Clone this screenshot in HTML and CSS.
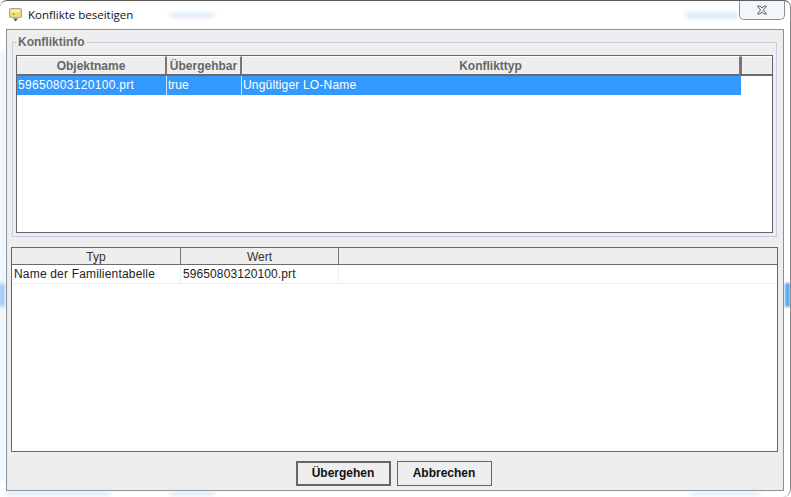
FILE: index.html
```html
<!DOCTYPE html>
<html lang="de">
<head>
<meta charset="utf-8">
<title>Konflikte beseitigen</title>
<link rel="stylesheet" href="styles.css">
</head>
<body>
<div class="window">
  <span class="smudge s1"></span><span class="smudge s2"></span><span class="smudge s3"></span><span class="smudge s4"></span><span class="smudge s5"></span><span class="smudge s6"></span><span class="smudge s7"></span><span class="smudge s8"></span><span class="smudge s9"></span>
  <header class="titlebar">
    <svg class="appicon" width="16" height="16" viewBox="0 0 16 16">
      <rect x="1.500" y="1.500" width="12" height="9" rx="1.500" fill="#f3dc7c" stroke="#a9a68e"/>
      <rect x="3" y="3" width="9" height="2" fill="#fbf0b8"/>
      <circle cx="5.500" cy="7" r="1" fill="#b89a3c"/>
      <path d="M5 11.500h5l-2.500 3z" fill="#4f5a5e"/>
    </svg>
    <span class="title">Konflikte beseitigen</span>
    <button class="close" aria-label="Schließen">
      <svg width="12" height="10" viewBox="0 0 12 10"><path d="M1.500 1h2.500l2 2 2-2h2.500l-3 4 3 4h-2.500l-2-2.200-2 2.200h-2.500l3-4z" fill="#eef1f4" stroke="#555" stroke-width=".9"/></svg>
    </button>
  </header>
  <main class="panel">
    <section class="group">
      <h2 class="legend">Konfliktinfo</h2>
      <div class="table t1">
        <div class="row head">
          <div class="cell c1">Objektname</div>
          <div class="cell c2">Übergehbar</div>
          <div class="cell c3">Konflikttyp</div>
          <div class="cell c4"></div>
        </div>
        <div class="row">
          <div class="sel c1 wide">59650803120100.prt</div>
          <div class="sel c2">true</div>
          <div class="sel c3 spaced">Ungültiger LO-Name</div>
        </div>
      </div>
    </section>
    <section class="table t2">
      <div class="row head">
        <div class="cell d1">Typ</div>
        <div class="cell d2">Wert</div>
        <div class="cell d3"></div>
      </div>
      <div class="row body">
        <div class="val d1 spaced">Name der Familientabelle</div>
        <div class="val d2 narrow">59650803120100.prt</div>
        <div class="val d3"></div>
      </div>
    </section>
    <footer class="actions">
      <button class="btn primary">Übergehen</button>
      <button class="btn">Abbrechen</button>
    </footer>
  </main>
</div>
</body>
</html>
```
FILE: styles.css
```css
* { box-sizing: border-box; }
html, body { margin: 0; height: 100%; }
body { background: #fff; font-family: "Liberation Sans", Arial, sans-serif; font-size: 12px; overflow: hidden; }

.window {
  position: relative;
  width: 791px;
  height: 497px;
  display: flex;
  flex-direction: column;
  padding: 0 6px 6px 6px;
  background: #fff;
  border-top: 1px solid #5d5d5d;
  border-right: 1px solid #8a8a8a;
  border-radius: 7px 7px 8px 0;
  overflow: hidden;
}

.smudge { position: absolute; background: #a9cdf2; filter: blur(2px); opacity: .6; }
.s1 { left: 170px; top: 12px; width: 44px; height: 4px; opacity: .5; }
.s2 { left: 686px; top: 12px; width: 52px; height: 5px; opacity: .5; }
.s3 { left: 6px; top: 491px; width: 104px; height: 3px; }
.s4 { left: 170px; top: 491px; width: 45px; height: 3px; }
.s5 { left: 0; top: 50px; width: 5px; height: 230px; opacity: .28; }
.s6 { left: 0; top: 282px; width: 4px; height: 24px; background: #5aa4ec; opacity: .9; }
.s7 { left: 785px; top: 282px; width: 5px; height: 24px; background: #4a9cf0; opacity: .9; filter: blur(1px); }
.s8 { left: 0; top: 310px; width: 5px; height: 170px; opacity: .28; }
.s9 { left: 690px; top: 491px; width: 70px; height: 3px; opacity: .5; }

.titlebar { height: 28px; flex: none; display: flex; align-items: center; position: relative; }
.appicon { margin: 0 4px 0 2px; flex: none; }
.title { font-family: "Open Sans", "Noto Sans", sans-serif; font-size: 11.500px; color: #111; margin-top: -1px; }
.close {
  position: absolute;
  right: -1px;
  top: -1px;
  width: 46px;
  height: 20px;
  padding: 0;
  display: flex;
  align-items: center;
  justify-content: center;
  background: #f4f7fa;
  border: 1px solid #8c9299;
  border-top: 0;
  border-radius: 0 0 5px 5px;
}

.panel {
  flex: 1;
  min-height: 0;
  display: flex;
  flex-direction: column;
  background: #eee;
  border: 1px solid #8f8f8f;
  padding: 0 5px 0 4px;
}

.group {
  position: relative;
  height: 195px;
  margin: 12px 1px 0 1px;
  padding: 12px 3px 3px;
  border: 1px solid #c3cfe0;
  flex: none;
}
.legend {
  position: absolute;
  left: 3px;
  top: -8px;
  margin: 0;
  padding: 0 2px;
  background: #eee;
  color: #6a6a6a;
  font-size: 12px;
  line-height: 14px;
  font-weight: bold;
}

.table { background: #fff; border: 1px solid #666; }
.t1 { height: 178px; }
.t2 { margin-top: 10px; flex: none; height: 205px; }

.row { display: flex; }
.head { background: #eee; }
.t1 .head { height: 20px; border-bottom: 2px solid #6b6b6b; }
.t2 .head { height: 17px; border-bottom: 1px solid #6b6b6b; }
.cell { text-align: center; border-right: 2px solid #777; line-height: 19px; }
.t1 .cell { color: #666; font-weight: bold; border-top: 1px solid #fff; line-height: 19px; }
.t2 .cell { color: #333; line-height: 18px; border-right: 1px solid #777; }
.cell:last-child { border-right: 0; }

.c1 { width: 150px; }
.c2 { width: 75px; }
.c3 { width: 499px; }
.c4 { flex: 1; }
.t1 .c4 { border-left: 1px solid #777; }

.sel {
  height: 19px;
  line-height: 19px;
  padding-left: 1px;
  color: #fff;
  background: #3399ff;
  border-right: 1px solid #cfe6ff;
}
.sel.c3 { border-right: 0; }
.spaced { letter-spacing: .18px; }
.wide { letter-spacing: .3px; }
.narrow { letter-spacing: .1px; }

.d1 { width: 169px; }
.d2 { width: 158px; }
.d3 { flex: 1; }

.body { border-bottom: 1px solid #eee; height: 19px; }
.val { line-height: 19px; padding-left: 2px; color: #222; border-right: 1px solid #eee; }
.val:last-child { border-right: 0; }

.actions { flex: 1; display: flex; justify-content: center; align-items: center; gap: 6px; padding: 4px 2px 0 0; }
.btn {
  width: 95px;
  height: 25px;
  padding: 0;
  font-family: inherit;
  font-size: 12px;
  font-weight: bold;
  color: #111;
  background: #eee;
  border: 1px solid #666;
}
.primary { border-width: 2px; }
```
